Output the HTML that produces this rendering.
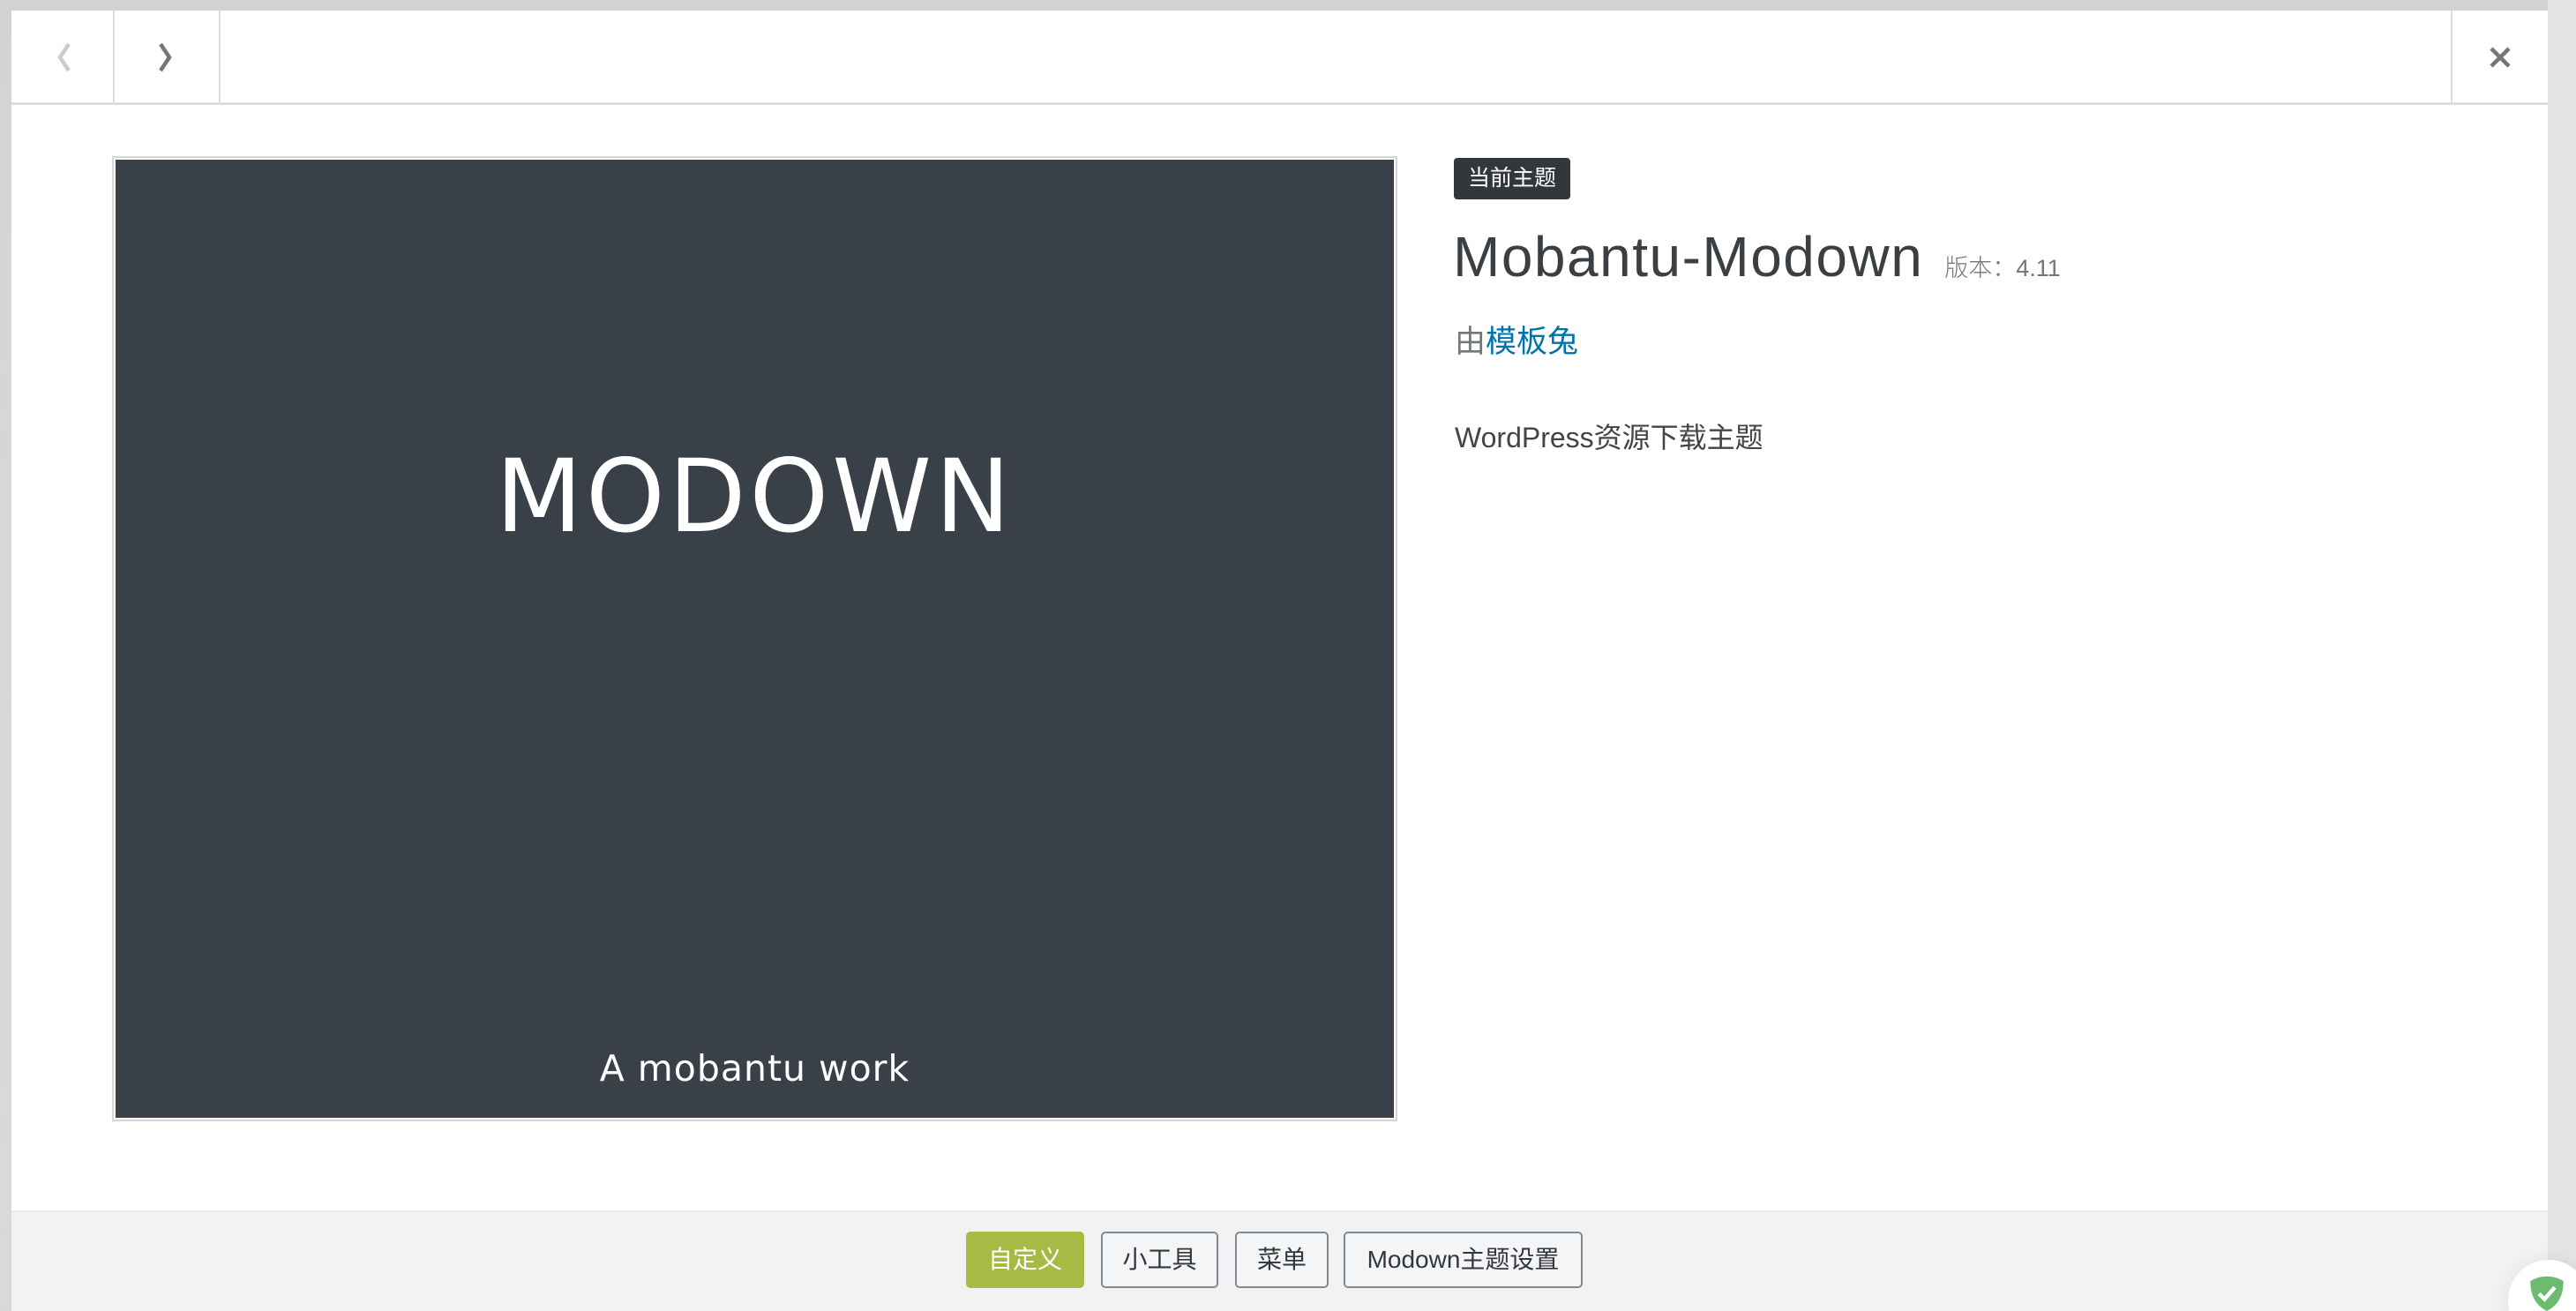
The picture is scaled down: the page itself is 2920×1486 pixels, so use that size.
<!DOCTYPE html>
<html><head><meta charset="utf-8">
<style>
*{margin:0;padding:0;box-sizing:border-box}
html,body{width:2920px;height:1486px;overflow:hidden}
body{background:linear-gradient(#d2d2d2,#d6d6d6 300px,#d9d9d9);position:relative;font-family:"Liberation Sans","Noto Sans CJK SC",sans-serif}
.rs{position:absolute;left:2888px;top:0;width:32px;height:1486px;background:#e4e4e4}
.modal{position:absolute;left:13px;top:12px;width:2875px;height:1486px;background:#fff}
.hdr{position:absolute;left:0;top:0;width:100%;height:107px;border-bottom:3px solid #dcdcde}
.vl{position:absolute;top:0;width:2px;height:107px;background:#dcdcde}
.foot{position:absolute;left:0;top:1360px;width:100%;height:126px;background:#f2f2f3;border-top:2px solid #ececec}
.shot{position:absolute;left:114px;top:165px;width:1457px;height:1094px;border:2px solid #d6d6d6;padding:2px;background:#fff}
.shot .in{width:100%;height:100%;background:#3a4048;position:relative;color:#fff;font-family:"DejaVu Sans",sans-serif;text-align:center}
.big{position:absolute;left:0;right:0;top:325px;font-size:114px;letter-spacing:4px;line-height:1}
.sub{position:absolute;left:0;right:0;top:1010px;font-size:41px;letter-spacing:1px;line-height:1}
.badge{position:absolute;left:1635px;top:167px;width:132px;height:47px;background:#32373c;color:#fff;border-radius:4px;font-size:25px;line-height:47px;text-align:center}
.title{position:absolute;left:1634px;top:241px;font-size:64px;letter-spacing:1.5px;color:#3a3f44;font-weight:300;line-height:1.2;white-space:nowrap}
.title span{font-size:27px;letter-spacing:0;color:#72777c;margin-left:24px}
.by{position:absolute;left:1636px;top:347px;font-size:35px;color:#72777c}
.by a{color:#0073aa;text-decoration:none}
.desc{position:absolute;left:1636px;top:459px;font-size:32px;color:#444}
.btn{position:absolute;top:1384px;height:64px;border:2px solid #7e8993;border-radius:5px;background:#f3f5f6;color:#32373c;font-size:28px;line-height:60px;text-align:center}
.btn.p{background:#a7bb44;border-color:#a7bb44;color:#fff}
</style></head><body>
<div class="rs"></div>
<div class="modal">
 <div class="hdr">
  <div class="vl" style="left:115px"></div>
  <div class="vl" style="left:235px"></div>
  <div class="vl" style="left:2765px"></div>
  <svg style="position:absolute;left:44px;top:36px" width="30" height="34" viewBox="0 0 30 34"><path d="M21 2 L11 17 L21 32" fill="none" stroke="#ccc" stroke-width="4.5"/></svg>
  <svg style="position:absolute;left:160px;top:36px" width="30" height="34" viewBox="0 0 30 34"><path d="M9 2 L19 17 L9 32" fill="none" stroke="#72777c" stroke-width="4.5"/></svg>
  <svg style="position:absolute;left:2809px;top:41px" width="24" height="24" viewBox="0 0 24 24"><path d="M2 2 L22 22 M22 2 L2 22" stroke="#72777c" stroke-width="4.5"/></svg>
 </div>
 <div class="shot"><div class="in"><div class="big">MODOWN</div><div class="sub">A mobantu work</div></div></div>
 <div class="badge">当前主题</div>
 <div class="title">Mobantu-Modown<span>版本：4.11</span></div>
 <div class="by">由<a>模板兔</a></div>
 <div class="desc">WordPress资源下载主题</div>
 <div class="foot"></div>
 <div class="btn p" style="left:1082px;width:134px">自定义</div>
 <div class="btn" style="left:1235px;width:133px">小工具</div>
 <div class="btn" style="left:1387px;width:106px">菜单</div>
 <div class="btn" style="left:1510px;width:271px">Modown主题设置</div>
</div>
<div style="position:absolute;left:2843px;top:1428px;width:92px;height:92px;border-radius:50%;background:#fff;box-shadow:0 0 20px rgba(0,0,0,.08)"></div>
<svg style="position:absolute;left:2864px;top:1445px" width="46" height="41" viewBox="0 0 46 46"><path d="M23 2 C14 2 7 5 2 8 C2 26 8 38 23 46 C38 38 44 26 44 8 C39 5 32 2 23 2Z" fill="#6dbb6f"/><path d="M13 24 L20 31 L33 16" fill="none" stroke="#fff" stroke-width="5"/></svg>
</body></html>
